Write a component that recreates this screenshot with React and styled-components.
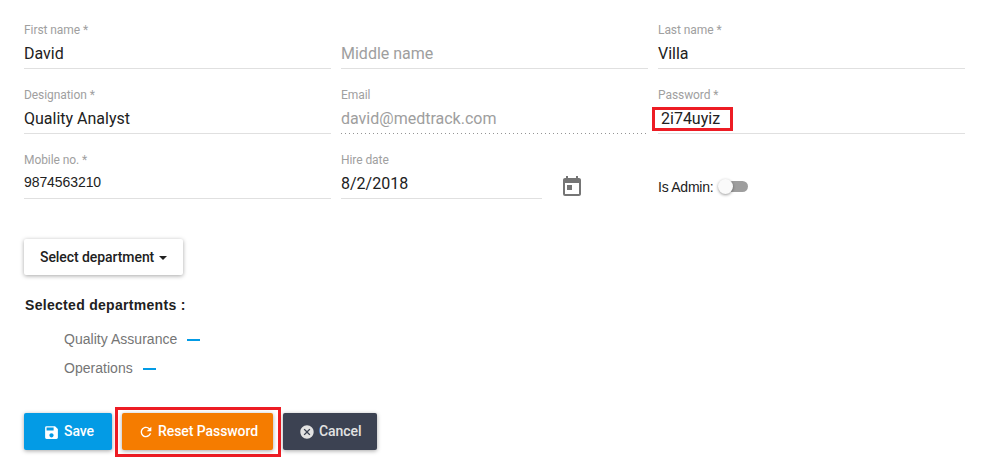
import React from 'react';
import styled, { createGlobalStyle } from 'styled-components';
import { MdSave, MdRefresh, MdCancel, MdToday } from 'react-icons/md';

const GlobalStyle = createGlobalStyle`
  * { box-sizing: border-box; }
  body { margin: 0; background: #fff; color: #212121; font-family: Roboto, sans-serif; overflow: hidden; }
`;

const Page = styled.main`
  width: 1008px;
  height: 473px;
  padding: 16px 24px 0;
`;

const Form = styled.div`
  display: grid;
  grid-template-columns: repeat(3, 307px);
  grid-auto-rows: 65px;
  column-gap: 10px;
`;

const FieldBox = styled.label`
  display: flex;
  flex-direction: column;
  width: ${(p) => p.$width || '307px'};
  height: 53px;
  border-bottom: ${(p) => (p.$disabled ? '0' : '1px solid #e0e0e0')};
  ${(p) => p.$disabled && `
    background: repeating-linear-gradient(90deg, #949494 0 1px, transparent 1px 4px) 0 100% / 100% 1px no-repeat;
  `}
`;

const Label = styled.span`
  height: 28px;
  padding-top: 6px;
  font-size: 12px;
  line-height: 16px;
  letter-spacing: -0.07px;
  color: #a0a0a0;
`;

const Value = styled.span`
  font-size: 16px;
  line-height: 20px;
  color: ${(p) => (p.$muted ? '#9e9e9e' : '#212121')};
`;

const PhoneValue = styled(Value)`
  font-family: 'Liberation Sans', sans-serif;
  font-size: 14px;
  line-height: 16px;
  letter-spacing: -0.08px;
`;

const PasswordMark = styled.span`
  width: 81px;
  height: 24px;
  margin: -2px 0 0 -6px;
  padding-left: 6px;
  border: 3px solid #ed1c24;
  background: #fff;
  font-size: 16px;
  line-height: 18px;
`;

const DateGroup = styled.div`
  display: flex;
`;

const CalendarIcon = styled(MdToday)`
  width: 24px;
  height: 24px;
  margin: 29px 0 0 18px;
  color: #757575;
`;

const AdminRow = styled.div`
  display: flex;
  align-items: center;
  height: 20px;
  margin-top: 31px;
  font: 14px/20px 'Liberation Sans', sans-serif;
  letter-spacing: -0.25px;
`;

const Track = styled.span`
  display: flex;
  align-items: center;
  width: 29px;
  height: 11px;
  margin: -1px 0 0 6px;
  border-radius: 6px;
  background: #9e9e9e;
`;

const Thumb = styled.span`
  width: 15px;
  height: 15px;
  margin-left: -1px;
  border-radius: 50%;
  background: #fafafa;
  box-shadow: 0 1px 3px rgba(0, 0, 0, 0.4);
`;

const Button = styled.button`
  display: flex;
  align-items: center;
  width: ${(p) => p.$width};
  height: 37px;
  padding: 0 0 1px ${(p) => p.$pad || '16px'};
  border: 0;
  border-radius: 2px;
  background: ${(p) => p.$bg || '#fff'};
  color: ${(p) => p.$color || '#212121'};
  font: 500 14px/36px Roboto, sans-serif;
  letter-spacing: -0.07px;
  white-space: nowrap;
  box-shadow: 0 1px 4px rgba(0, 0, 0, 0.35);
  svg { flex: none; margin: 2px 4px 0 0; }
`;

const SelectButton = styled(Button)`
  height: 36px;
  margin-top: 28px;
  padding-bottom: 0;
`;

const Caret = styled.span`
  margin: 2px 0 0 5px;
  border: 4px solid transparent;
  border-top-color: #212121;
  border-bottom: 0;
`;

const Heading = styled.h2`
  margin: 20px 0 0 1px;
  font: bold 14px/20px 'Liberation Sans', sans-serif;
  letter-spacing: 0.3px;
`;

const Departments = styled.ul`
  margin: 10px 0 0;
  padding: 0 0 0 40px;
  list-style: none;
`;

const Department = styled.li`
  display: flex;
  align-items: center;
  height: 29px;
  font: 14px/29px 'Liberation Sans', sans-serif;
  letter-spacing: 0.03px;
  color: #757575;
`;

const Remove = styled.span`
  width: 13px;
  height: 2px;
  margin: 1px 0 0 10px;
  background: #039be5;
`;

const Actions = styled.div`
  display: flex;
  align-items: flex-start;
  margin-top: 24px;
  padding-top: 6px;
`;

const ResetMark = styled.div`
  display: flex;
  width: 166px;
  height: 50px;
  margin: -6px 2px 0 3px;
  padding: 3px 0 0 4px;
  border: 3px solid #ed1c24;
`;

function Field({ label, value, muted, disabled, width }) {
  return (
    <FieldBox $width={width} $disabled={disabled}>
      <Label>{label}</Label>
      <Value $muted={muted}>{value}</Value>
    </FieldBox>
  );
}

export default function App() {
  return (
    <Page>
      <GlobalStyle />
      <Form>
        <Field label="First name *" value="David" />
        <Field label="" value="Middle name" muted />
        <Field label="Last name *" value="Villa" />
        <Field label="Designation *" value="Quality Analyst" />
        <Field label="Email" value="david@medtrack.com" muted disabled />
        <FieldBox>
          <Label>Password *</Label>
          <PasswordMark>2i74uyiz</PasswordMark>
        </FieldBox>
        <FieldBox>
          <Label>Mobile no. *</Label>
          <PhoneValue>9874563210</PhoneValue>
        </FieldBox>
        <DateGroup>
          <Field label="Hire date" value="8/2/2018" width="201px" />
          <CalendarIcon />
        </DateGroup>
        <AdminRow>
          Is Admin:
          <Track><Thumb /></Track>
        </AdminRow>
      </Form>
      <SelectButton $width="159px">Select department<Caret /></SelectButton>
      <Heading>Selected departments :</Heading>
      <Departments>
        <Department>Quality Assurance<Remove /></Department>
        <Department>Operations<Remove /></Department>
      </Departments>
      <Actions>
        <Button $width="88px" $pad="19px" $bg="#039be5" $color="#fff"><MdSave size={17} />Save</Button>
        <ResetMark>
          <Button $width="151px" $pad="16px" $bg="#f57c00" $color="#fff"><MdRefresh size={16} />Reset Password</Button>
        </ResetMark>
        <Button $width="94px" $pad="16px" $bg="#3c4252" $color="#e2e2e2"><MdCancel size={16} />Cancel</Button>
      </Actions>
    </Page>
  );
}
